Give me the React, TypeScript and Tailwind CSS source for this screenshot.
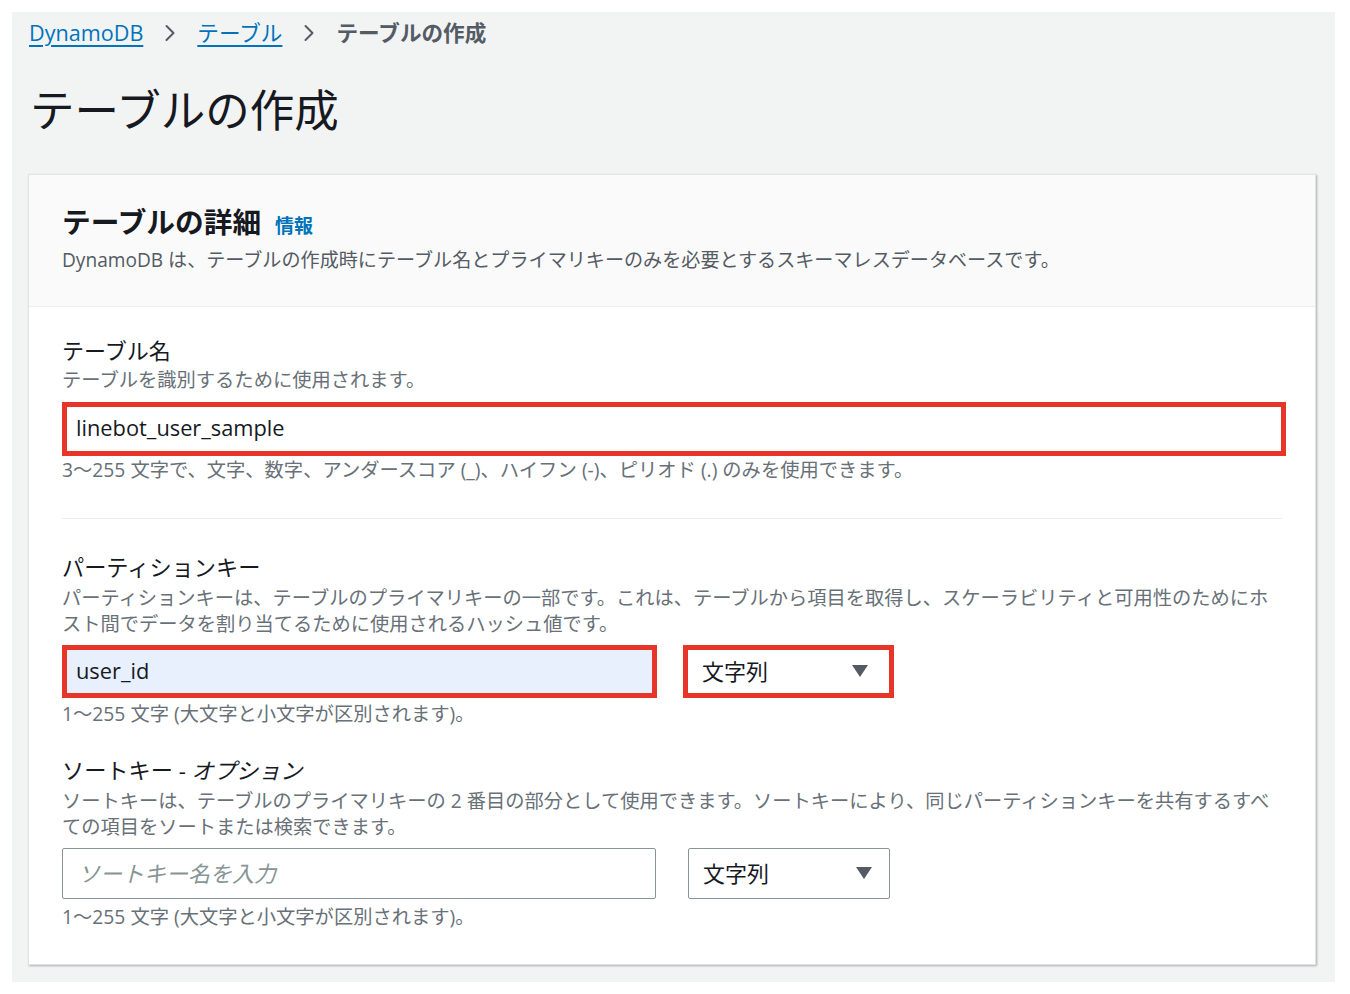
import { ChevronRight } from "lucide-react";

const font = "font-['Open_Sans','Noto_Sans_CJK_JP',sans-serif]";

function Caret() {
  return (
    <svg width="18" height="14" viewBox="0 0 18 14" className="shrink-0">
      <path d="M1 1h16L9 13z" fill="#545b64" />
    </svg>
  );
}

export default function App() {
  return (
    <div className={`bg-white p-[12px] ${font}`}>
      <div className="w-[1323px] h-[970px] bg-[#f2f3f3] pl-[17px] pr-[19px] pt-[6px]">
        {/* Breadcrumb */}
        <nav className="flex items-center h-[30px] text-[21.6px] leading-[30px]">
          <a href="#" className="text-[#0073bb] underline underline-offset-4">DynamoDB</a>
          <ChevronRight size={28} strokeWidth={1.7} className="text-[#545b64] mx-[13px]" />
          <a href="#" className="text-[#0073bb] underline underline-offset-4">テーブル</a>
          <ChevronRight size={28} strokeWidth={1.7} className="text-[#545b64] mx-[13px]" />
          <span className="text-[#545b64] font-bold">テーブルの作成</span>
        </nav>

        <h1 className="mt-[34px] text-[44.5px] leading-[56px] text-[#16191f] pl-[1px]">テーブルの作成</h1>

        {/* Card */}
        <div className="mt-[36px] bg-white border border-[#e1e4e4] shadow-[1px_1px_2px_rgba(0,28,36,0.3)] -ml-[1px]">
          <div className="bg-[#fafafa] border-b border-[#eaeded] pl-[33px] pr-[29px] pt-[29px] pb-[33px]">
            <div className="flex items-baseline gap-[14px]">
              <h2 className="text-[28.7px] leading-[36px] font-bold text-[#16191f]">テーブルの詳細</h2>
              <a href="#" className="text-[19px] font-bold text-[#0073bb]">情報</a>
            </div>
            <p className="mt-[6px] text-[19.1px] leading-[26px] text-[#545b64]">
              DynamoDB は、テーブルの作成時にテーブル名とプライマリキーのみを必要とするスキーマレスデータベースです。
            </p>
          </div>

          <div className="pl-[33px] pr-[29px] pt-[28px] pb-[34px]">
            {/* Table name */}
            <div className="text-[22px] leading-[30px] text-[#16191f]">テーブル名</div>
            <p className="mt-[2px] text-[19.3px] leading-[26px] text-[#687078]">テーブルを識別するために使用されます。</p>
            <div className="mt-[9px] h-[54px] border-[5px] border-[#e8352a] flex items-center pl-[9px] text-[21.8px] text-[#16191f]">
              linebot_user_sample
            </div>
            <p className="mt-[1px] text-[19.3px] leading-[26px] text-[#687078]">
              3〜255 文字で、文字、数字、アンダースコア (_)、ハイフン (-)、ピリオド (.) のみを使用できます。
            </p>

            <div className="mt-[35px] mr-[4px] border-t border-[#eaeded]" />

            {/* Partition key */}
            <div className="mt-[34px] text-[22.2px] leading-[30px] text-[#16191f]">パーティションキー</div>
            <p className="mt-[2px] text-[19.25px] leading-[26px] text-[#687078]">
              パーティションキーは、テーブルのプライマリキーの一部です。これは、テーブルから項目を取得し、スケーラビリティと可用性のためにホ
              <br />
              スト間でデータを割り当てるために使用されるハッシュ値です。
            </p>
            <div className="mt-[8px] flex gap-[26px]">
              <div className="w-[595px] h-[53px] border-[5px] border-[#e8352a] bg-[#e8f0fe] flex items-center pl-[9px] text-[21.8px] text-[#16191f]">
                user_id
              </div>
              <div className="w-[211px] h-[53px] border-[5px] border-[#e8352a] flex items-center justify-between pl-[14px] pr-[20px] text-[22px] text-[#16191f]">
                <span>文字列</span>
                <Caret />
              </div>
            </div>
            <p className="mt-[3px] text-[19.3px] leading-[26px] text-[#687078]">1〜255 文字 (大文字と小文字が区別されます)。</p>

            {/* Sort key */}
            <div className="mt-[29px] text-[22.2px] leading-[30px] text-[#16191f]">
              ソートキー - <span className="italic">オプション</span>
            </div>
            <p className="mt-[2px] text-[19.25px] leading-[26px] text-[#687078]">
              ソートキーは、テーブルのプライマリキーの 2 番目の部分として使用できます。ソートキーにより、同じパーティションキーを共有するすべ
              <br />
              ての項目をソートまたは検索できます。
            </p>
            <div className="mt-[8px] flex gap-[32px]">
              <div className="w-[594px] h-[51px] border border-[#879596] rounded-[2px] flex items-center pl-[15px] text-[22px] text-[#879596] italic">
                ソートキー名を入力
              </div>
              <div className="w-[202px] h-[51px] border border-[#879596] rounded-[2px] flex items-center justify-between pl-[14px] pr-[16px] text-[22px] text-[#16191f]">
                <span>文字列</span>
                <Caret />
              </div>
            </div>
            <p className="mt-[5px] text-[19.3px] leading-[26px] text-[#687078]">1〜255 文字 (大文字と小文字が区別されます)。</p>
          </div>
        </div>
      </div>
    </div>
  );
}
